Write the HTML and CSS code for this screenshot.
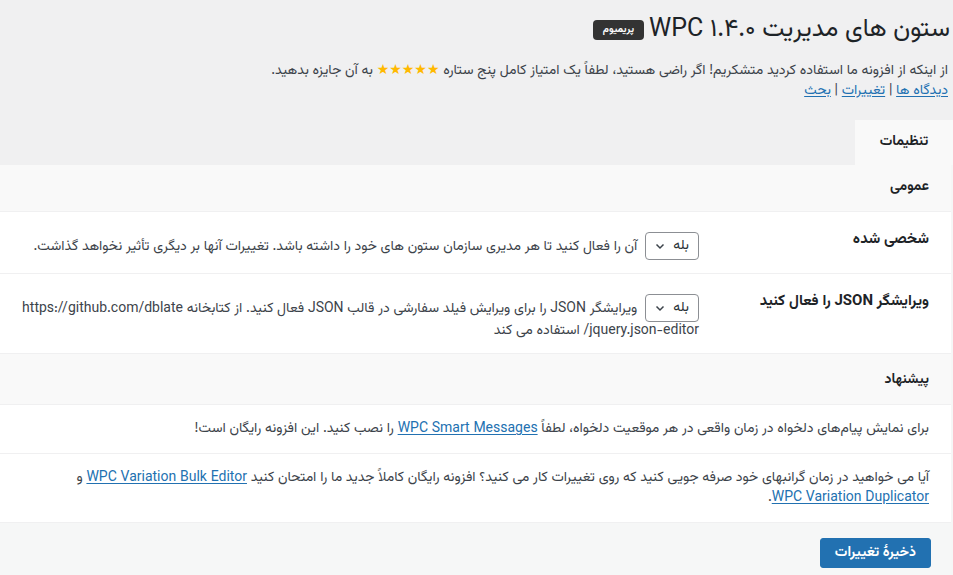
FILE: index.html
```html
<!DOCTYPE html>
<html lang="fa" dir="rtl">
<head>
<meta charset="utf-8">
<title>ستون های مدیریت WPC</title>
<link rel="stylesheet" href="styles.css">
</head>
<body>
<div class="wrap">
  <h1 class="title">ستون های مدیریت WPC ۱.۴.۰ <span class="badge">پریمیوم</span></h1>
  <p class="intro">از اینکه از افزونه ما استفاده کردید متشکریم! اگر راضی هستید، لطفاً یک امتیاز کامل پنج ستاره <span class="stars">★★★★★</span> به آن جایزه بدهید.<br>
    <a href="#">دیدگاه ها</a> | <a href="#">تغییرات</a> | <a href="#">بحث</a>
  </p>
  <nav class="tabs"><a class="tab active" href="#">تنظیمات</a></nav>
  <form class="panel">
    <table class="form-table">
      <tr class="heading"><th colspan="2">عمومی</th></tr>
      <tr>
        <th class="label">شخصی شده</th>
        <td>
          <span class="select">بله <svg class="chev" viewBox="0 0 12 12" width="12" height="12"><path d="M2.5 4.5 6 8l3.5-3.5" fill="none" stroke="#3c434a" stroke-width="1.5"/></svg></span>
          آن را فعال کنید تا هر مدیری سازمان ستون های خود را داشته باشد. تغییرات آنها بر دیگری تأثیر نخواهد گذاشت.
        </td>
      </tr>
      <tr>
        <th class="label">ویرایشگر JSON را فعال کنید</th>
        <td>
          <span class="select">بله <svg class="chev" viewBox="0 0 12 12" width="12" height="12"><path d="M2.5 4.5 6 8l3.5-3.5" fill="none" stroke="#3c434a" stroke-width="1.5"/></svg></span>
          ویرایشگر JSON را برای ویرایش فیلد سفارشی در قالب JSON فعال کنید. از کتابخانه https://github.com/dblate<wbr>/jquery.json-editor استفاده می کند
        </td>
      </tr>
      <tr class="heading heading-2"><th colspan="2">پیشنهاد</th></tr>
      <tr class="full">
        <td colspan="2">برای نمایش پیام‌های دلخواه در زمان واقعی در هر موقعیت دلخواه، لطفاً <a href="#">WPC Smart Messages</a> را نصب کنید. این افزونه رایگان است!</td>
      </tr>
      <tr class="full">
        <td colspan="2">آیا می خواهید در زمان گرانبهای خود صرفه جویی کنید که روی تغییرات کار می کنید؟ افزونه رایگان کاملاً جدید ما را امتحان کنید <a href="#">WPC Variation Bulk Editor</a> و <a href="#">WPC Variation Duplicator</a>.</td>
      </tr>
    </table>
    <div class="footer"><button type="button" class="button-primary">ذخیرهٔ تغییرات</button></div>
  </form>
</div>
</body>
</html>
```
FILE: styles.css
```css
html, body {
  margin: 0;
  padding: 0;
}
body {
  background: #f0f0f1;
  color: #3c434a;
  font-family: Vazirmatn, "Noto Sans Arabic", Roboto, "DejaVu Sans", sans-serif;
  font-size: 14px;
  line-height: 1.4;
}
.wrap {
  padding: 0;
}
.title {
  margin: 0;
  padding: 15px 3px 0 0;
  font-size: 25px;
  font-weight: 400;
  line-height: 29px;
  color: #1d2327;
  display: flex;
  align-items: center;
  gap: 5px;
}
.badge {
  display: inline-block;
  background: #333;
  color: #fff;
  font-size: 10px;
  font-weight: 700;
  line-height: 20px;
  padding: 0 10px;
  border-radius: 4px;
}
.intro {
  margin: 17px 5px 0 0;
  line-height: 20px;
  color: #3c434a;
}
.stars {
  color: #ffb900;
  letter-spacing: -1px;
}
a {
  color: #2271b1;
  text-underline-offset: 2px;
}
.tabs {
  display: flex;
  margin-top: 19px;
}
.tab {
  display: block;
  width: 98px;
  height: 45px;
  line-height: 45px;
  text-align: center;
  background: #f9f9f9;
  color: #1d2327;
  font-weight: 700;
  font-size: 14px;
  text-decoration: none;
}
.panel {
  margin: 0;
  background: #fff;
  border-right: 2px solid #f6f6f6;
}
.form-table {
  width: 100%;
  border-collapse: collapse;
}
.form-table tr {
  border-bottom: 1px solid #f0f0f1;
}
.form-table th,
.form-table td {
  text-align: right;
  vertical-align: top;
}
.heading th {
  background: #f9f9f9;
  height: 46px;
  padding: 0 22px 0 0;
  vertical-align: middle;
  font-size: 14px;
  font-weight: 700;
  color: #1d2327;
}
.heading-2 th {
  height: 51px;
  padding-top: 4px;
  box-sizing: border-box;
}
.label {
  width: 220px;
  padding: 18px 22px 13px 10px;
  font-size: 15px;
  font-weight: 700;
  color: #1d2327;
  line-height: 20px;
}
.form-table td {
  padding: 20px 0 13px 22px;
  line-height: 18px;
  color: #3c434a;
}
.select {
  display: inline-flex;
  align-items: center;
  justify-content: space-between;
  box-sizing: border-box;
  width: 54px;
  height: 28px;
  padding: 0 9px 0 8px;
  margin-left: 4px;
  border: 1px solid #8c8f94;
  border-radius: 4px;
  background: #fff;
  vertical-align: middle;
  line-height: 26px;
  color: #2c3338;
}
.chev {
  display: block;
}
.full td {
  padding: 14px 22px 14px 22px;
  line-height: 20px;
}
.full a {
  white-space: nowrap;
}
.footer {
  background: #f6f7f7;
  padding: 15px 20px 9px 0;
  display: flex;
}
.button-primary {
  background: #2271b1;
  color: #fff;
  border: 1px solid #2271b1;
  border-radius: 3px;
  height: 30px;
  padding: 0 14px;
  font-family: inherit;
  font-size: 14px;
  font-weight: 700;
  cursor: pointer;
}
```
